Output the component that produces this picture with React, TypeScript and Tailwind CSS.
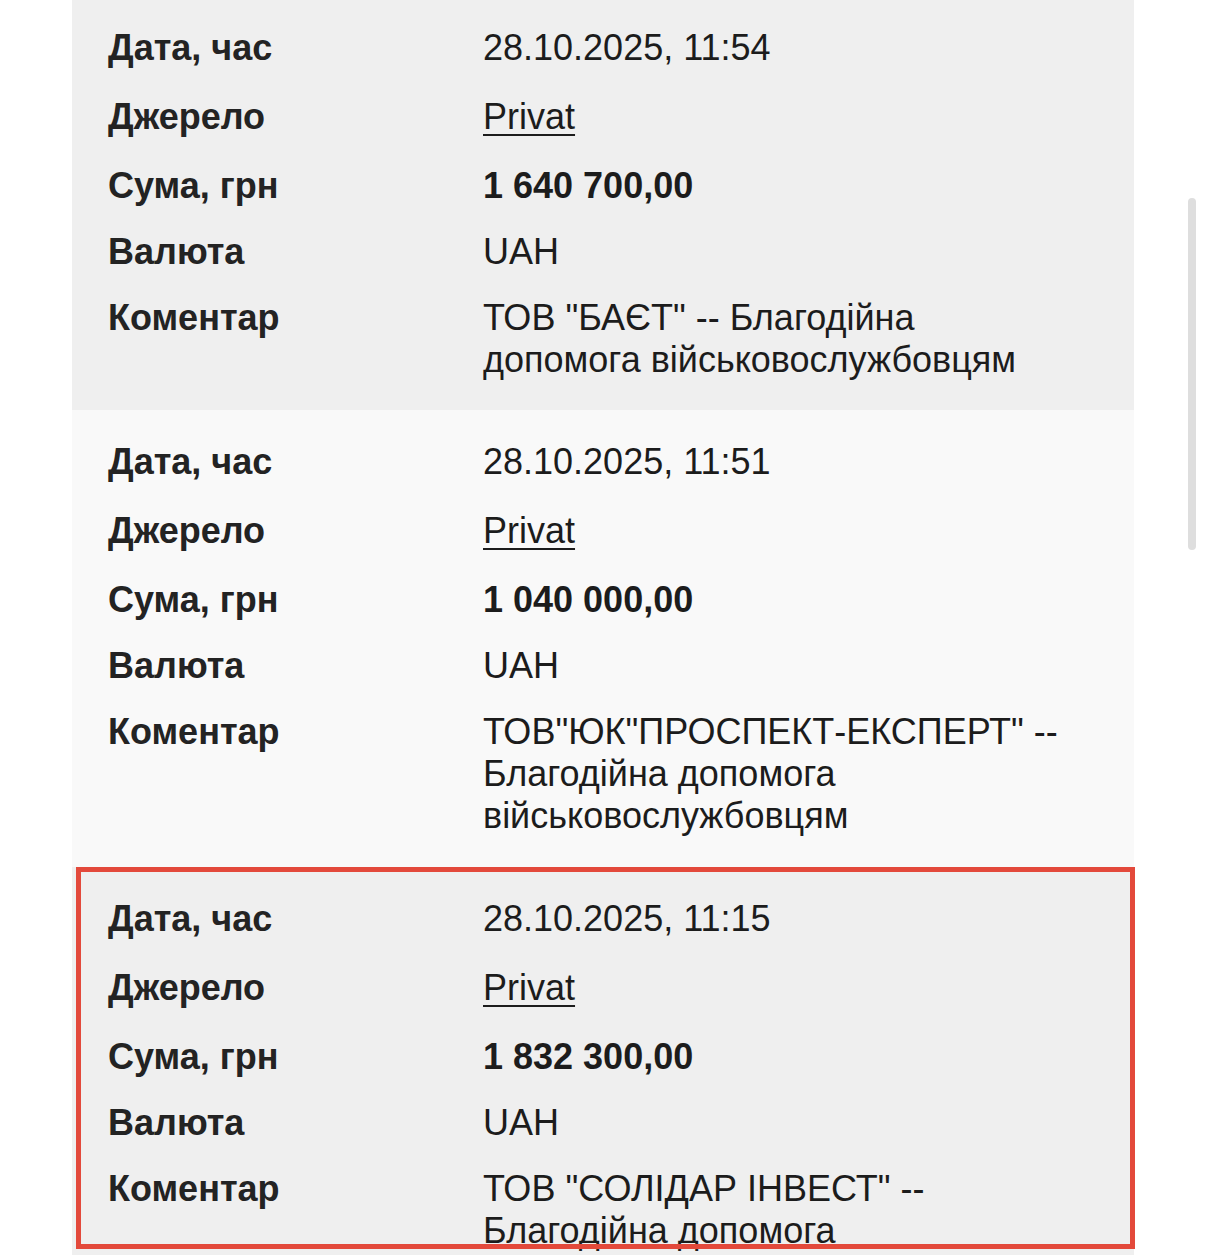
import React from 'react';

type Row = {
  label: string;
  value: string[];
  kind?: 'link' | 'bold' | 'plain';
  gap: 'wide' | 'narrow' | 'none';
};

type Payment = {
  date: string;
  amount: string;
  comment: string[];
};

const payments: Payment[] = [
  {
    date: '28.10.2025, 11:54',
    amount: '1 640 700,00',
    comment: ['ТОВ "БАЄТ" -- Благодійна', 'допомога військовослужбовцям'],
  },
  {
    date: '28.10.2025, 11:51',
    amount: '1 040 000,00',
    comment: ['ТОВ"ЮК"ПРОСПЕКТ-ЕКСПЕРТ" --', 'Благодійна допомога', 'військовослужбовцям'],
  },
  {
    date: '28.10.2025, 11:15',
    amount: '1 832 300,00',
    comment: ['ТОВ "СОЛІДАР ІНВЕСТ" --', 'Благодійна допомога', 'військовослужбовцям'],
  },
];

const toRows = (p: Payment): Row[] => [
  { label: 'Дата, час', value: [p.date], gap: 'none' },
  { label: 'Джерело', value: ['Privat'], kind: 'link', gap: 'wide' },
  { label: 'Сума, грн', value: [p.amount], kind: 'bold', gap: 'wide' },
  { label: 'Валюта', value: ['UAH'], gap: 'narrow' },
  { label: 'Коментар', value: p.comment, gap: 'narrow' },
];

const PaymentCard: React.FC<{ payment: Payment; idx: number }> = ({ payment, idx }) => {
  const bg = idx % 2 === 0 ? 'bg-[#efefef]' : 'bg-[#f9f9f9]';
  const pad = idx === 0 ? 'pt-[27px] pb-[29px]' : 'pt-[31px] pb-[30px]';
  const highlighted = idx === 2;

  return (
    <div className={`relative ${bg} ${pad} pl-[36px] pr-[50px]`}>
      {toRows(payment).map((row, i) => (
        <div
          key={i}
          className={`grid grid-cols-[375px_1fr] leading-[42px] ${
            row.gap === 'wide' ? 'mt-[27px]' : row.gap === 'narrow' ? 'mt-[24px]' : ''
          }`}
        >
          <div className="font-bold text-[#232323]">{row.label}</div>
          <div className="text-[#1c1c1c]">
            {row.kind === 'link' ? (
              <span className="underline decoration-[2px] underline-offset-[5px]">{row.value[0]}</span>
            ) : row.kind === 'bold' ? (
              <span className="font-bold">{row.value[0]}</span>
            ) : (
              row.value.map((line, j) => (
                <span key={j} className="block whitespace-nowrap">
                  {line}
                </span>
              ))
            )}
          </div>
        </div>
      ))}

      {/* annotation frame */}
      {highlighted && (
        <div className="absolute left-[4px] top-0 w-[1059px] h-[382px] border-[5px] border-[#e3493b] pointer-events-none" />
      )}
    </div>
  );
};

export default function App() {
  return (
    <div className="relative h-[1255px] overflow-hidden bg-white font-['Liberation_Sans',Arial,sans-serif] text-[36px]">
      <div className="ml-[72px] w-[1062px]">
        {payments.map((p, idx) => (
          <PaymentCard key={idx} payment={p} idx={idx} />
        ))}
      </div>

      {/* scroll indicator */}
      <div className="absolute left-[1188px] top-[198px] w-[8px] h-[352px] rounded-full bg-[#dedede]" />
    </div>
  );
}
